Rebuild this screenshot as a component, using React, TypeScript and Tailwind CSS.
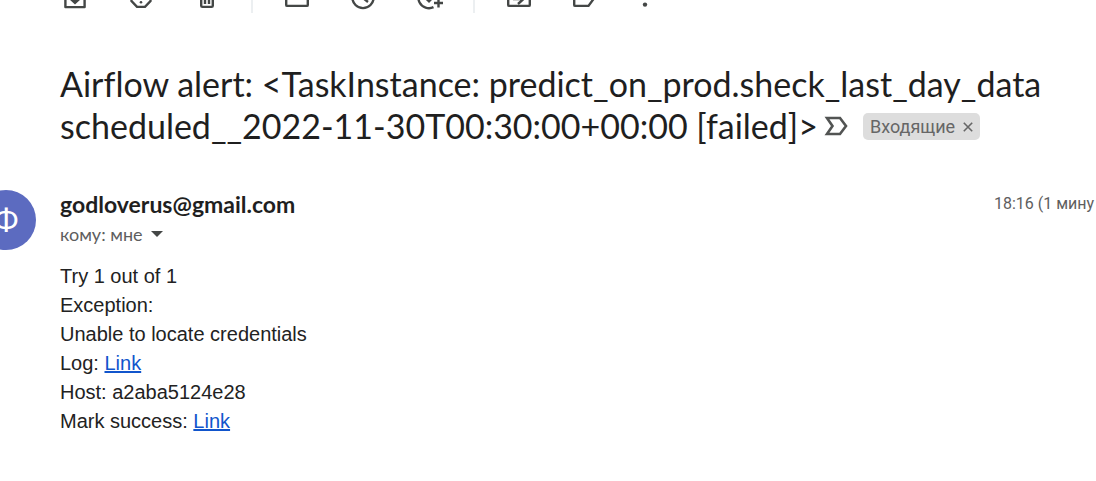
import type { ReactNode } from "react";

function ToolButton({ label, children, narrow = false }: { label: string; children: ReactNode; narrow?: boolean }) {
  return (
    <button type="button" aria-label={label} className={`flex shrink-0 justify-center ${narrow ? "w-[54px]" : "w-[66px]"}`}>
      <svg viewBox="0 -17 30 30" className="size-[30px]" fill="none" stroke="#444746" strokeWidth="2.4" aria-hidden="true">
        {children}
      </svg>
    </button>
  );
}

function Divider() {
  return (
    <div className="flex h-full w-6 shrink-0 justify-center">
      <div className="w-0.5 bg-[#eceff1]" />
    </div>
  );
}

function Toolbar() {
  return (
    <div className="flex h-[13px] items-end overflow-hidden pl-[42px]">
      <ToolButton label="Архивировать">
        <path d="M5.400-11v18.100h19.200V-11l-3-4H8.400z" strokeLinejoin="round" />
        <path d="M13-8h4v7h4l-6 5.500L9-1h4z" fill="#444746" stroke="none" />
      </ToolButton>
      <ToolButton label="В спам">
        <path d="M11-14h8l5.500 5.500v9.500L19 6.900h-8L5.500 1v-9.500z" />
        <path d="M15-10v8" />
        <circle cx="15" cy="2.300" r="1.300" fill="#444746" stroke="none" />
      </ToolButton>
      <ToolButton label="Удалить">
        <path d="M9.200-11V5.700q0 1.200 1.200 1.200h9.200q1.200 0 1.200-1.200V-11M6-12h18M12-14h6M13-8v12M17-8v12" />
      </ToolButton>
      <Divider />
      <ToolButton label="Отметить как непрочитанное">
        <rect x="4.200" y="-12" width="21.600" height="17.900" rx="1" />
        <path d="m4-11 11 7 11-7" />
      </ToolButton>
      <ToolButton label="Отложить">
        <circle cx="15" cy="-2.500" r="10.600" />
        <path d="M15-9v7l5 4" />
      </ToolButton>
      <ToolButton label="Добавить в задачи">
        <path d="M19.500 7.200A10.600 10.600 0 1 1 24-8M10.500-3l4.500 4.300L25-9M24.500-1.500v9M20 3h9" />
      </ToolButton>
      <Divider />
      <ToolButton label="Переместить">
        <rect x="4.200" y="-12" width="21.600" height="17.900" rx="1" />
        <path d="M9-1h10M14-6.500l5.500 5.500L14 4" />
      </ToolButton>
      <ToolButton label="Ярлыки">
        <path d="M4.200-12h14.300l6.500 9-6.500 8.900H5.200q-1 0-1-1z" />
      </ToolButton>
      <ToolButton label="Ещё" narrow>
        <g fill="#444746" stroke="none">
          <circle cx="15" cy="-10.500" r="2.200" />
          <circle cx="15" cy="-3" r="2.200" />
          <circle cx="15" cy="4.600" r="2.200" />
        </g>
      </ToolButton>
    </div>
  );
}

function Subject() {
  return (
    <div className="mt-[50px] pr-10 pl-[60px]">
      <h1 className="text-[34px] leading-[42px] text-[#1f1f1f] [font-variant-ligatures:none]">
        Airflow alert: &lt;TaskInstance: predict_on_prod.sheck_last_day_data
        <br />
        scheduled__2022-11-30T00:30:00+00:00 [failed]&gt;
        <span className="ml-1.5 inline-flex h-[42px] items-center gap-[15px] align-top">
          <button type="button" aria-label="Важное">
            <svg viewBox="0 0 24 20" className="h-5 w-6" fill="none" stroke="#525453" strokeWidth="2.600" aria-hidden="true">
              <path d="M3 2h13l6 8-6 8H3l5.500-8z" />
            </svg>
          </button>
          <span className="flex h-[27px] items-center gap-2 rounded-[5px] bg-[#dddddd] px-[7px] font-['Roboto',sans-serif] text-[18px] leading-[27px] text-[#666666]">
            Входящие
            <button type="button" aria-label="Удалить ярлык «Входящие»" className="pt-0.5">
              <svg viewBox="0 0 10 10" className="size-[10px]" fill="none" stroke="#666666" strokeWidth="1.600" aria-hidden="true">
                <path d="m.8.8 8.400 8.400M9.200.8.8 9.200" />
              </svg>
            </button>
          </span>
        </span>
      </h1>
    </div>
  );
}

function Sender() {
  return (
    <div className="mt-[43px] flex items-start">
      <div className="-ml-6 flex size-[60px] shrink-0 items-center justify-center rounded-full bg-[#5c6bc0] font-['Roboto',sans-serif] text-[32px] text-white">
        Ф
      </div>
      <div className="ml-6 min-w-0 flex-1">
        <div className="flex items-center justify-between">
          <h2 className="text-[23px] leading-[28px] font-bold text-[#1f1f1f]">godloverus@gmail.com</h2>
          <time className="w-[102px] shrink-0 font-['Roboto',sans-serif] text-[16px] leading-[28px] whitespace-nowrap text-[#5e5e5e]">18:16 (1 мину</time>
        </div>
        <button type="button" className="flex items-center gap-2 text-[18px] leading-[32px] text-[#5e5e5e]">
          кому: мне
          <svg viewBox="0 0 12 6" className="h-[6px] w-3" fill="#444746" aria-hidden="true">
            <path d="M0 0h12L6 6z" />
          </svg>
        </button>
      </div>
    </div>
  );
}

function Message() {
  return (
    <div className="mt-3 pl-[60px] font-['Liberation_Sans',sans-serif] text-[20px] leading-[29px] text-[#222222]">
      <p>Try 1 out of 1</p>
      <p>Exception:</p>
      <p>Unable to locate credentials</p>
      <p>
        Log: <a href="#log" className="text-[#1155cc] underline">Link</a>
      </p>
      <p>Host: a2aba5124e28</p>
      <p>
        Mark success: <a href="#success" className="text-[#1155cc] underline">Link</a>
      </p>
    </div>
  );
}

export default function App() {
  return (
    <main className="min-h-screen overflow-hidden bg-white font-['Lato',sans-serif]">
      <Toolbar />
      <Subject />
      <Sender />
      <Message />
    </main>
  );
}
